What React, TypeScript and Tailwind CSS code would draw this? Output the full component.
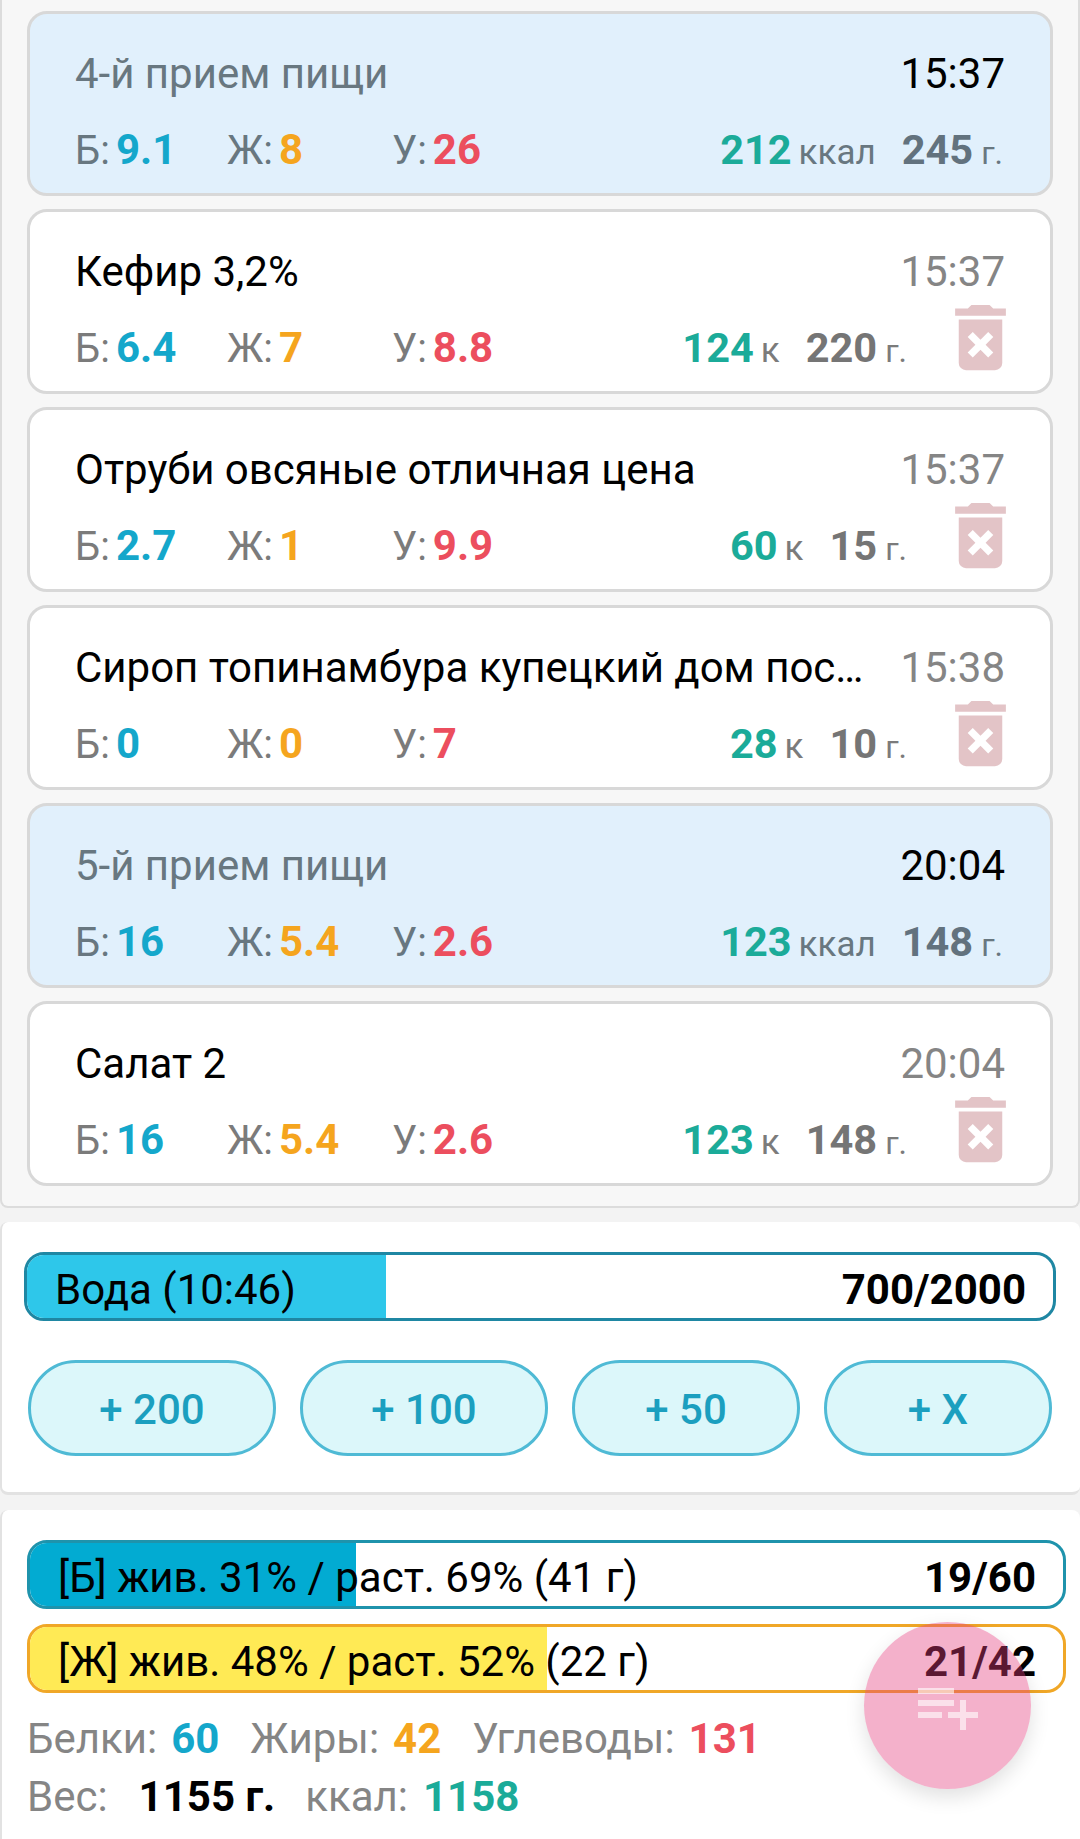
const items = [
  { meal: true, title: '4-й прием пищи', time: '15:37', b: '9.1', j: '8', u: '26', kcal: '212', weight: '245' },
  { meal: false, title: 'Кефир 3,2%', time: '15:37', b: '6.4', j: '7', u: '8.8', kcal: '124', weight: '220' },
  { meal: false, title: 'Отруби овсяные отличная цена', time: '15:37', b: '2.7', j: '1', u: '9.9', kcal: '60', weight: '15' },
  { meal: false, title: 'Сироп топинамбура купецкий дом пос…', time: '15:38', b: '0', j: '0', u: '7', kcal: '28', weight: '10' },
  { meal: true, title: '5-й прием пищи', time: '20:04', b: '16', j: '5.4', u: '2.6', kcal: '123', weight: '148' },
  { meal: false, title: 'Салат 2', time: '20:04', b: '16', j: '5.4', u: '2.6', kcal: '123', weight: '148' },
]

function TrashIcon() {
  return (
    <svg viewBox="0 0 24 24" className="w-[87px] h-[87px] fill-[#e3c4c7]">
      <path d="M6 19a2 2 0 0 0 2 2h8a2 2 0 0 0 2-2V7H6v12zm2.46-7.12 1.41-1.41L12 12.59l2.12-2.12 1.41 1.41L13.41 14l2.12 2.12-1.41 1.41L12 15.41l-2.13 2.12-1.41-1.41L10.59 14l-2.13-2.12zM15.5 4l-1-1h-5l-1 1H5v2h14V4h-3.5z" />
    </svg>
  )
}

function Macro({ label, value, color, width }: { label: string; value: string; color: string; width: string }) {
  return (
    <div className={`flex items-baseline ${width}`}>
      <span className="text-[40px]">{label}</span>
      <span className={`ml-[6px] text-[42px] font-bold ${color}`}>{value}</span>
    </div>
  )
}

function FoodCard({ item }: { item: (typeof items)[number] }) {
  const muted = item.meal ? 'text-[#687780]' : 'text-[#7b7b7b]'
  return (
    <div className={`h-[185px] rounded-[20px] border-[3px] border-[#d8d8d8] pl-[45px] pr-[47px] pt-[34px] ${item.meal ? 'bg-[#e1f0fc]' : 'bg-white'}`}>
      <div className="flex h-[50px] items-center justify-between text-[42px]">
        <span className={`whitespace-nowrap ${item.meal ? 'text-[#687780]' : 'text-black'}`}>{item.title}</span>
        <span className={`-mr-[2px] ${item.meal ? 'text-black' : 'text-[#858585]'}`}>{item.time}</span>
      </div>
      <div className={`mt-[20px] flex h-[50px] items-baseline ${muted}`}>
        <Macro label="Б:" value={item.b} color="text-[#14a7cb]" width="w-[152px]" />
        <Macro label="Ж:" value={item.j} color="text-[#f5a51e]" width="w-[165px]" />
        <Macro label="У:" value={item.u} color="text-[#ec4e5e]" width="w-[200px]" />
        <div className="ml-auto flex items-baseline">
          <span className="text-[41.5px] font-bold text-[#1bab99]">{item.kcal}</span>
          <span className="ml-[7px] text-[35px]">{item.meal ? 'ккал' : 'к'}</span>
          <span className={`ml-[26px] text-[41.5px] font-bold ${item.meal ? 'text-[#62727e]' : 'text-[#757575]'}`}>{item.weight}</span>
          <span className="ml-[8px] text-[32px]">г.</span>
          {!item.meal && (
            <div className="-mb-[19px] -mr-[21px] -mt-[41px] ml-[30px] self-center">
              <TrashIcon />
            </div>
          )}
        </div>
      </div>
    </div>
  )
}

function Bar({ percent, fill, border, left, right }: { percent: number; fill: string; border: string; left: string; right: string }) {
  return (
    <div className={`relative flex h-[69px] items-center justify-between overflow-hidden rounded-[20px] border-[3px] bg-white pl-[28px] pr-[27px] pt-[5px] text-[42px] text-black ${border}`}>
      <div className={`absolute inset-y-0 left-0 ${fill}`} style={{ width: `${percent}%` }} />
      <span className="relative whitespace-nowrap">{left}</span>
      <span className="relative font-bold">{right}</span>
    </div>
  )
}

function WaterButton({ label, width }: { label: string; width: string }) {
  return (
    <button className={`flex h-[96px] items-center justify-center rounded-[48px] border-[3px] border-[#4fbad5] bg-[#dcf7fa] pt-[3px] text-[42px] font-medium text-[#1b9fbf] ${width}`}>
      {label}
    </button>
  )
}

export default function App() {
  return (
    <div className="relative h-[1839px] w-[1080px] overflow-hidden bg-[#f3f3f3] [font-family:Roboto,sans-serif]">
      {/* список */}
      <div className="h-[1208px] rounded-b-[8px] border-x-[2px] border-b-[2px] border-[#dcdcdc] bg-[#f7f7f7] pl-[25px] pr-[25px] pt-[11px]">
        <div className="flex flex-col gap-[13px]">
          {items.map((item, index) => (
            <FoodCard key={index} item={item} />
          ))}
        </div>
      </div>

      {/* вода */}
      <div className="mt-[14px] h-[273px] rounded-[8px] border-b-[3px] border-l-[2px] border-[#e2e2e2] bg-white pl-[22px] pr-[24px] pt-[30px]">
        <Bar percent={35} fill="bg-[#2ec7ea]" border="border-[#1f87a3]" left="Вода (10:46)" right="700/2000" />
        <div className="mt-[39px] flex gap-[24px] pl-[4px] pr-[3px]">
          <WaterButton label="+ 200" width="w-[248px]" />
          <WaterButton label="+ 100" width="w-[248px]" />
          <WaterButton label="+ 50" width="w-[228px]" />
          <WaterButton label="+ X" width="w-[228px]" />
        </div>
      </div>

      {/* итого */}
      <div className="mt-[15px] h-[329px] rounded-t-[8px] border-l-[2px] border-[#e2e2e2] bg-white pl-[25px] pr-[14px] pt-[30px]">
        <div className="flex flex-col gap-[15px]">
          <Bar percent={31.6} fill="bg-[#02abd2]" border="border-[#1f93ac]" left="[Б] жив. 31% / раст. 69% (41 г)" right="19/60" />
          <Bar percent={50} fill="bg-[#ffea55]" border="border-[#f0a727]" left="[Ж] жив. 48% / раст. 52% (22 г)" right="21/42" />
        </div>
        <div className="mt-[14px] flex h-[58px] items-baseline text-[42px] text-[#858585]">
          <span>Белки:</span>
          <span className="ml-[14px] font-bold text-[#14a7cb]">60</span>
          <span className="ml-[31px]">Жиры:</span>
          <span className="ml-[14px] font-bold text-[#f5a51e]">42</span>
          <span className="ml-[31px]">Углеводы:</span>
          <span className="ml-[14px] font-bold text-[#ec4e5e]">131</span>
        </div>
        <div className="flex h-[58px] items-baseline text-[42px] text-[#858585]">
          <span>Вес:</span>
          <span className="ml-[31px] font-bold text-black">1155 г.</span>
          <span className="ml-[30px]">ккал:</span>
          <span className="ml-[15px] font-bold text-[#1bab99]">1158</span>
        </div>
      </div>

      {/* кнопка добавления */}
      <button className="absolute left-[864px] top-[1622px] flex h-[167px] w-[167px] items-center justify-center rounded-full bg-[#e43c7d]/40 shadow-[0_8px_20px_rgba(0,0,0,0.12)]">
        <svg viewBox="0 0 24 24" className="h-[72px] w-[72px] fill-white/60">
          <path d="M14 10H2v2h12v-2zm0-4H2v2h12V6zm4 8v-4h-2v4h-4v2h4v4h2v-4h4v-2h-4zM2 16h8v-2H2v2z" />
        </svg>
      </button>
    </div>
  )
}
